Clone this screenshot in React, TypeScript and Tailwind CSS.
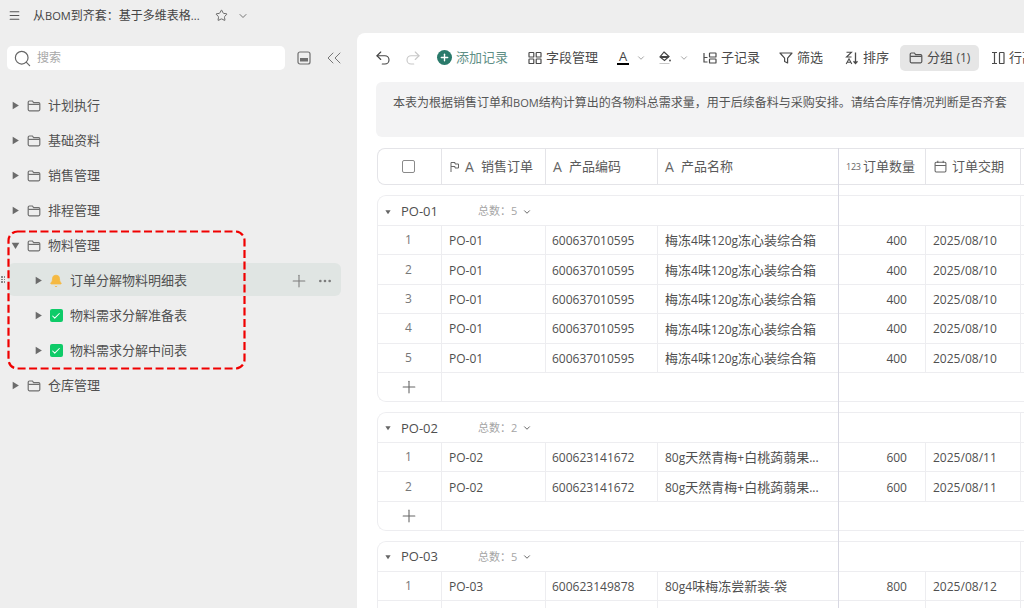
import React from "react";
import { Menu, Star, ChevronDown, Search, ChevronsLeft, Undo2, Redo2, Plus, Ellipsis, Bell, Check } from "lucide-react";

const FONT = "font-['Open_Sans','Noto_Sans_CJK_SC',sans-serif]";

function Mix({ text }: { text: string }) {
  const parts = text.split(/([\x20-\x7e]+)/).filter(Boolean);
  return (
    <>
      {parts.map((p, i) =>
        /^[\x20-\x7e]+$/.test(p) ? (
          <span key={i} className="text-[0.925em]">{p}</span>
        ) : (
          <span key={i}>{p}</span>
        )
      )}
    </>
  );
}

function Folder({ className = "" }: { className?: string }) {
  return (
    <svg viewBox="0 0 14 14" className={className} fill="none" stroke="currentColor" strokeWidth="1.2">
      <path d="M1.2 3.2c0-.7.5-1.2 1.2-1.2h3l1.2 1.6h5c.7 0 1.2.5 1.2 1.2v5.8c0 .7-.5 1.2-1.2 1.2H2.4c-.7 0-1.2-.5-1.2-1.2z" />
      <path d="M1.2 5.4h11.6" />
    </svg>
  );
}

function Tri({ down = false }: { down?: boolean }) {
  return (
    <svg viewBox="0 0 8 8" className={`w-[9px] h-[9px] text-[#6b6b6b] ${down ? "rotate-90" : ""}`} fill="currentColor">
      <path d="M1.5 0.6 7 4 1.5 7.4z" />
    </svg>
  );
}

function FolderRow({ label, down = false }: { label: string; down?: boolean }) {
  return (
    <div className="h-[33px] flex items-center pt-[2px] pl-[11px] text-[13px] text-[#505050]">
      <Tri down={down} />
      <Folder className="w-[14px] h-[14px] ml-[7px] text-[#6f6f6f]" />
      <span className="ml-[7px]">{label}</span>
    </div>
  );
}

function SheetRow({ label, bell = false, active = false }: { label: string; bell?: boolean; active?: boolean }) {
  return (
    <div className={`h-[33px] flex items-center pt-[2px] pl-[26px] rounded-md text-[13px] text-[#505050] ${active ? "bg-[#e0e5e3]" : ""}`}>
      <Tri />
      <span className="w-[14px] h-[14px] ml-[6px] flex items-center justify-center">
        {bell ? (
          <Bell className="w-[14px] h-[14px] text-[#f5b942]" fill="#f5b942" strokeWidth={1.5} />
        ) : (
          <span className="w-[13px] h-[13px] rounded-[2px] bg-[#0ecb68] flex items-center justify-center">
            <Check className="w-[10px] h-[10px] text-white" strokeWidth={2.5} />
          </span>
        )}
      </span>
      <span className="ml-[7px]">{label}</span>
      {active && (
        <div className="ml-auto mr-[8px] flex items-center gap-[8px] text-[#7d7d7d]">
          <Plus className="w-[20px] h-[20px]" strokeWidth={1.3} />
          <Ellipsis className="w-[16px] h-[16px]" strokeWidth={2} />
        </div>
      )}
    </div>
  );
}

function Sidebar() {
  return (
    <aside className="w-[357px] shrink-0 flex flex-col relative">
      <div className="h-[30px] flex items-center pl-[8px] pt-[1px] text-[13px] text-[#444]">
        <Menu className="w-[13px] h-[13px] text-[#555]" strokeWidth={2} />
        <span className="ml-[12px] w-[178px] whitespace-nowrap text-[12px]"><Mix text="从BOM到齐套：基于多维表格..." /></span>
        <Star className="w-[13px] h-[13px] ml-[4px] text-[#666]" strokeWidth={1.8} />
        <ChevronDown className="w-[12px] h-[12px] ml-[9px] text-[#666]" strokeWidth={1.8} />
      </div>
      <div className="mt-[16px] flex items-center pl-[7px]">
        <div className="w-[278px] h-[24px] rounded-[5px] bg-white flex items-center pl-[6px]">
          <Search className="w-[19px] h-[19px] text-[#666]" strokeWidth={1.5} />
          <span className="ml-[5px] text-[12px] text-[#a8a8a8]">搜索</span>
        </div>
        <svg viewBox="0 0 14 14" className="w-[14px] h-[14px] ml-[12px] text-[#6f6f6f]" fill="none" stroke="currentColor" strokeWidth="1.2">
          <rect x="1" y="1" width="12" height="12" rx="2" />
          <rect x="3" y="7" width="8" height="3.5" fill="currentColor" stroke="none" />
        </svg>
        <ChevronsLeft className="w-[24px] h-[24px] ml-[11px] text-[#777]" strokeWidth={1} />
      </div>
      <div className="mt-[18px] flex flex-col gap-[2px] pl-[8px] pr-[16px]">
        <div className="-ml-[8px]"><FolderRow label="计划执行" /></div>
        <div className="-ml-[8px]"><FolderRow label="基础资料" /></div>
        <div className="-ml-[8px]"><FolderRow label="销售管理" /></div>
        <div className="-ml-[8px]"><FolderRow label="排程管理" /></div>
        <div className="-ml-[8px]"><FolderRow label="物料管理" down /></div>
        <SheetRow label="订单分解物料明细表" bell active />
        <SheetRow label="物料需求分解准备表" />
        <SheetRow label="物料需求分解中间表" />
        <div className="-ml-[8px]"><FolderRow label="仓库管理" /></div>
      </div>
      <svg className="absolute left-[7px] top-[230px] w-[239px] h-[140px]" viewBox="0 0 239 140" fill="none">
        <rect x="1.5" y="1.5" width="236" height="137" rx="9" stroke="#f00000" strokeWidth="2.2" strokeDasharray="8 3.5" />
      </svg>
      <div className="absolute left-[1px] top-[276px] grid grid-cols-2 gap-x-[1px] gap-y-[1px]">
        {[0, 1, 2, 3, 4, 5].map((i) => (
          <span key={i} className="w-[1.5px] h-[1.5px] bg-[#888]" />
        ))}
      </div>
    </aside>
  );
}

function Tool({ children, className = "" }: { children: React.ReactNode; className?: string }) {
  return <div className={`flex items-center shrink-0 text-[13px] text-[#4a4a4a] ${className}`}>{children}</div>;
}

function Toolbar() {
  return (
    <div className="h-[49px] shrink-0 flex items-center pl-[17px] overflow-hidden whitespace-nowrap">
      <Undo2 className="w-[18px] h-[18px] text-[#444] shrink-0" strokeWidth={1.5} />
      <Redo2 className="w-[18px] h-[18px] ml-[12px] text-[#c8c8c8] shrink-0" strokeWidth={1.5} />
      <Tool className="ml-[15px] text-[#5f8f86]">
        <span className="w-[15px] h-[15px] rounded-full bg-[#2a7a6b] flex items-center justify-center">
          <Plus className="w-[11px] h-[11px] text-white" strokeWidth={3} />
        </span>
        <span className="ml-[4px]">添加记录</span>
      </Tool>
      <Tool className="ml-[20px]">
        <svg viewBox="0 0 14 14" className="w-[14px] h-[14px]" fill="none" stroke="currentColor" strokeWidth="1.2">
          <rect x="1" y="1.5" width="4.8" height="4.5" rx="0.6" /><rect x="8.2" y="1.5" width="4.8" height="4.5" rx="0.6" />
          <rect x="1" y="8" width="4.8" height="4.5" rx="0.6" /><rect x="8.2" y="8" width="4.8" height="4.5" rx="0.6" />
        </svg>
        <span className="ml-[4px]">字段管理</span>
      </Tool>
      <Tool className="ml-[19px]">
        <span className="w-[12px] flex flex-col items-center">
          <span className="text-[13px] leading-[12px] text-[#444]">A</span>
          <span className="w-[12px] h-[2px] bg-black mt-[1px]" />
        </span>
        <ChevronDown className="w-[10px] h-[10px] ml-[7px] text-[#777]" strokeWidth={1.6} />
      </Tool>
      <Tool className="ml-[12px]">
        <svg viewBox="0 0 14 14" className="w-[14px] h-[14px] text-[#444]" fill="none" stroke="currentColor" strokeWidth="1.2">
          <path d="M6 1 11 5.5 6.5 9.5 2 6z" /><path d="M2.5 6h8" strokeWidth="1.8" />
          <circle cx="12" cy="9.5" r="0.9" fill="currentColor" stroke="none" />
          <path d="M1.5 12.5h10" stroke="#c8c8c8" />
        </svg>
        <ChevronDown className="w-[10px] h-[10px] ml-[7px] text-[#777]" strokeWidth={1.6} />
      </Tool>
      <Tool className="ml-[14px]">
        <svg viewBox="0 0 14 14" className="w-[14px] h-[14px]" fill="none" stroke="currentColor" strokeWidth="1.2">
          <path d="M1 2v9h3.5M1 6.5h3.5" /><rect x="6.5" y="2" width="6.5" height="4" rx="0.6" /><rect x="6.5" y="8" width="6.5" height="4" rx="0.6" />
        </svg>
        <span className="ml-[4px]">子记录</span>
      </Tool>
      <Tool className="ml-[19px]">
        <svg viewBox="0 0 14 14" className="w-[14px] h-[14px]" fill="none" stroke="currentColor" strokeWidth="1.2" strokeLinejoin="round">
          <path d="M1 2h12L8.6 7.2V12L5.6 10.5V7.2z" />
        </svg>
        <span className="ml-[4px]">筛选</span>
      </Tool>
      <Tool className="ml-[22px]">
        <svg viewBox="0 0 14 14" className="w-[14px] h-[14px]" fill="none" stroke="currentColor" strokeWidth="1.1">
          <path d="M1.5 1.2h5L1.5 6h5" />
          <path d="M1.2 13 4 7.8 6.8 13M2.2 11.2h3.6" />
          <path d="M10.5 1.5V12.5M8.5 10.2l2 2.3 2-2.3" strokeWidth="1.3" />
        </svg>
        <span className="ml-[4px]">排序</span>
      </Tool>
      <Tool className="ml-[11px] h-[26px] w-[79px] rounded-[5px] bg-[#e6e6e6] pl-[9px]">
        <Folder className="w-[14px] h-[14px] text-[#555]" />
        <span className="ml-[4px]">分组 <span className="text-[12px]">(1)</span></span>
      </Tool>
      <Tool className="ml-[12px]">
        <svg viewBox="0 0 14 14" className="w-[14px] h-[14px]" fill="none" stroke="currentColor" strokeWidth="1.2">
          <path d="M1 1.5h5M1 12.5h5M3.5 1.5v11" /><rect x="8.5" y="1.5" width="4.5" height="11" rx="0.6" />
        </svg>
        <span className="ml-[4px]">行高</span>
      </Tool>
    </div>
  );
}

const GRID = "grid grid-cols-[63px_104px_112px_181px_87px_95px_1fr]";

function HeadCell({ icon, label, className = "" }: { icon: React.ReactNode; label: string; className?: string }) {
  return (
    <div className={`flex items-center border-l border-[#e4e4e8] pl-[7px] text-[13px] text-[#5a5a5a] ${className}`}>
      {icon}
      <span className="ml-[5px]">{label}</span>
    </div>
  );
}

const A = <span className="text-[14px] leading-none text-[#666] w-[11px]">A</span>;

function TableHead() {
  return (
    <div className={`${GRID} h-[37px] w-[660px] border border-[#e4e4e8] border-r-0 rounded-l-[8px]`}>
      <div className="flex items-center justify-center pr-[2px]">
        <span className="w-[13px] h-[13px] rounded-[2px] border border-[#8a8a8a]" />
      </div>
      <HeadCell
        icon={
          <span className="flex items-center gap-[5px] ml-[1px]">
            <svg viewBox="0 0 10 12" className="w-[10px] h-[12px] text-[#666]" fill="none" stroke="currentColor" strokeWidth="1"><path d="M1 11V1.5h4v1.5h3.5v4H5V5.5H1" /></svg>
            {A}
          </span>
        }
        label="销售订单"
      />
      <HeadCell icon={A} label="产品编码" />
      <HeadCell icon={A} label="产品名称" />
      <HeadCell
        className="border-[#d8d8e2]"
        icon={<span className="text-[9px] text-[#666] tracking-tight w-[12px]">123</span>}
        label="订单数量"
      />
      <HeadCell
        className="pl-[8px]"
        icon={
          <svg viewBox="0 0 12 12" className="w-[13px] h-[13px] text-[#666]" fill="none" stroke="currentColor" strokeWidth="1"><rect x="1" y="2" width="10" height="9" rx="1" /><path d="M1 5h10M3.5 .8v2M8.5 .8v2" /></svg>
        }
        label="订单交期"
      />
      <div className="border-l border-[#e4e4e8]" />
    </div>
  );
}

type Row = [string, string, string, string];

function DataRow({ idx, row }: { idx: number; row: Row }) {
  return (
    <div className={`${GRID} h-[29.4px] border-t border-[#ededf0] items-stretch text-[13px] text-[#4f4f4f]`}>
      <div className="flex items-center justify-center text-[#777] text-[12px] pr-[2px]">{idx}</div>
      <div className="flex items-center border-l border-[#ededf0] pl-[7px] pt-[2px]"><Mix text={row[0]} /></div>
      <div className="flex items-center border-l border-[#ededf0] pl-[6px] pt-[2px]"><Mix text={row[1]} /></div>
      <div className="flex items-center border-l border-[#ededf0] pl-[7px] pt-[2px] whitespace-nowrap overflow-hidden"><span><Mix text={row[2]} /></span></div>
      <div className="flex items-center justify-end border-l border-[#d8d8e2] pr-[18px] pt-[2px]"><Mix text={row[3].split("|")[0]} /></div>
      <div className="flex items-center border-l border-[#ededf0] pl-[7px] pt-[2px] whitespace-nowrap"><Mix text={row[3].split("|")[1]} /></div>
      <div className="border-l border-[#ededf0]" />
    </div>
  );
}

function Group({ name, total, rows, addRow = true }: { name: string; total: number; rows: Row[]; addRow?: boolean }) {
  return (
    <div className="w-[660px] border border-[#ededf0] border-r-0 rounded-l-[9px] shrink-0">
      <div className={`${GRID} h-[29px]`}>
        <div className="col-span-3 flex items-center pl-[7px] pt-[2px] relative">
          <svg viewBox="0 0 8 8" className="w-[6px] h-[6px] text-[#666]" fill="currentColor"><path d="M0.5 1.5h7L4 7z" /></svg>
          <span className="ml-[10px] text-[13px] text-[#4f4f4f]">{name}</span>
          <span className="absolute left-[100px] flex items-center text-[11px] text-[#a5a5a5]">
            总数：{total}
            <ChevronDown className="w-[10px] h-[10px] ml-[5px] text-[#666]" strokeWidth={2.4} />
          </span>
        </div>
        <div />
        <div />
        <div />
        <div className="border-l border-[#ededf0]" />
      </div>
      {rows.map((r, i) => (
        <DataRow key={i} idx={i + 1} row={r} />
      ))}
      {addRow && (
        <div className={`${GRID} h-[29px] border-t border-[#ededf0]`}>
          <div className="flex items-center justify-center pr-[2px]">
            <Plus className="w-[20px] h-[20px] text-[#666]" strokeWidth={1.3} />
          </div>
          <div className="col-span-3 border-l border-[#ededf0]" />
        </div>
      )}
    </div>
  );
}

const p1: Row = ["PO-01", "600637010595", "梅冻4味120g冻心装综合箱", "400|2025/08/10"];
const p2: Row = ["PO-02", "600623141672", "80g天然青梅+白桃蒟蒻果...", "600|2025/08/11"];
const p3: Row = ["PO-03", "600623149878", "80g4味梅冻尝新装-袋", "800|2025/08/12"];

export default function App() {
  return (
    <div className={`w-[1024px] h-[608px] overflow-hidden flex bg-[#eeeeee] ${FONT}`}>
      <Sidebar />
      <main className="w-[667px] h-[575px] mt-[33px] bg-white rounded-tl-[8px] flex flex-col overflow-hidden">
        <Toolbar />
        <div className="ml-[19px] h-[55px] shrink-0 bg-[#f3f3f4] rounded-l-[6px] pl-[17px] pt-[12px] text-[12px] text-[#555] whitespace-nowrap overflow-hidden">
          <Mix text="本表为根据销售订单和BOM结构计算出的各物料总需求量，用于后续备料与采购安排。请结合库存情况判断是否齐套" />
        </div>
        <div className="ml-[20px] mt-[11px] flex flex-col gap-[10px] relative">
          <TableHead />
          <Group name="PO-01" total={5} rows={[p1, p1, p1, p1, p1]} />
          <Group name="PO-02" total={2} rows={[p2, p2]} />
          <Group name="PO-03" total={5} rows={[p3, p3]} addRow={false} />
          <div className="absolute left-[461px] top-0 bottom-0 w-px bg-[#d8d8e2]" />
        </div>
      </main>
    </div>
  );
}
